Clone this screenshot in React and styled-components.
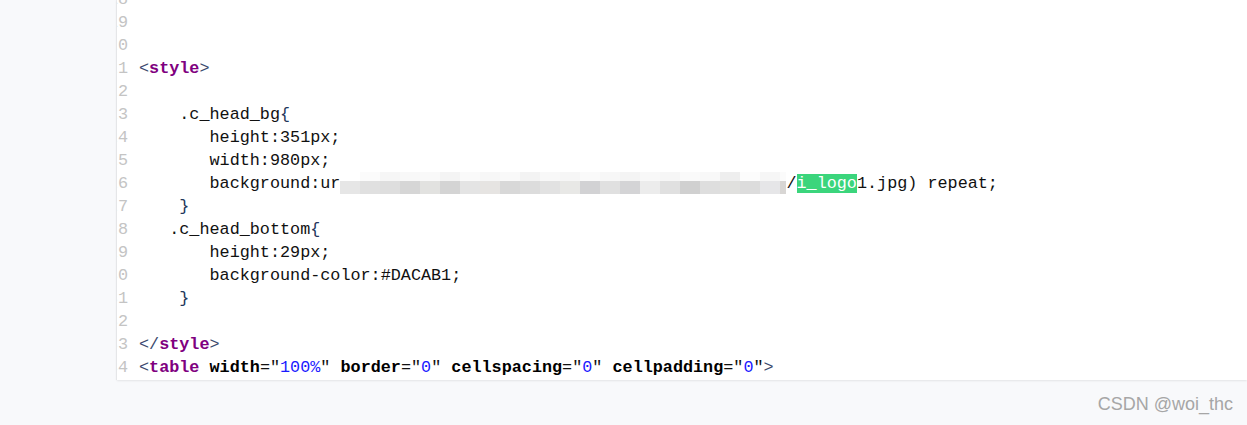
import React from 'react';
import styled, { createGlobalStyle } from 'styled-components';

const GlobalStyle = createGlobalStyle`
  html, body {
    margin: 0;
    padding: 0;
    background: #f8f9fb;
  }
`;

const Page = styled.div`
  width: 1247px;
  height: 425px;
  overflow: hidden;
  background: #f8f9fb;
  display: flex;
  flex-direction: column;
`;

const Editor = styled.div`
  margin-left: 117px;
  width: 1130px;
  height: 380px;
  flex: none;
  overflow: hidden;
  background: #ffffff;
  box-shadow: 0 1px 2px rgba(0, 0, 0, 0.08), -1px 0 1px rgba(0, 0, 0, 0.05);
`;

const Lines = styled.div`
  margin-top: -12px;
  font-family: 'Liberation Mono', 'Courier New', monospace;
  font-size: 16.8px;
  line-height: 23px;
`;

const Line = styled.div`
  display: flex;
  height: 23px;
`;

const Gutter = styled.div`
  width: 11px;
  flex: none;
  overflow: hidden;
  display: flex;
  justify-content: flex-end;
  color: #c4c4c4;
  white-space: pre;
`;

const Code = styled.div`
  padding-left: 11px;
  white-space: pre;
  color: #111;
`;

const Tok = styled.span`
  ${({ $k }) => {
    switch ($k) {
      case 'br':
        return 'color: #3c4a6e;';
      case 'tag':
        return 'color: #800080; font-weight: bold;';
      case 'attr':
        return 'color: #000; font-weight: bold;';
      case 'val':
        return 'color: #1a1aff;';
      case 'brace':
        return 'color: #23355a;';
      case 'hl':
        return 'color: #ffffff; background: #3bd57c;';
      default:
        return 'color: #111;';
    }
  }}
`;

const Mosaic = styled.span`
  display: inline-flex;
  flex-direction: column;
  vertical-align: top;
  width: 446px;
  height: 23px;
  overflow: hidden;
`;

const MosaicRow = styled.span`
  display: flex;
  height: ${({ $h }) => $h}px;
`;

const Cell = styled.span`
  width: 20px;
  flex: none;
  background: ${({ $c }) => $c};
`;

const Footer = styled.div`
  flex: 1;
  display: flex;
  align-items: center;
  justify-content: flex-end;
  padding: 4px 14px 0 0;
  font-family: 'Liberation Sans', Arial, sans-serif;
  font-size: 18px;
  color: #a6a6a6;
`;

const topShades = [
  '#ffffff', '#fbfbfb', '#f6f6f6', '#f8f8f8', '#f9f9f9', '#f4f4f4', '#fafafa', '#f7f7f7',
  '#f9f9f9', '#f3f3f3', '#f8f8f8', '#f6f6f6', '#fafafa', '#f7f7f7', '#f4f4f4', '#f8f8f8',
  '#f6f6f6', '#fafafa', '#f8f8f8', '#eeeeee', '#fcfcfc', '#f6f6f6', '#fbfbfb',
];

const bottomShades = [
  '#e6e6e6', '#e0e0e0', '#dedede', '#d6d6d6', '#e2e2e0', '#d4d4d4', '#e4e4e4', '#e6e4e2',
  '#d8d8d8', '#dcdcdc', '#e2e2e2', '#e8e8e6', '#d2d2d4', '#e0e0e0', '#d4d4d6', '#ececec',
  '#e0e0e0', '#d0d0d0', '#dedede', '#e0e0de', '#dcdcdc', '#e6e6e8', '#d8d6d4',
];

const Blur = () => (
  <Mosaic>
    <MosaicRow $h={9}>
      {topShades.map((c, i) => <Cell key={i} $c={c} />)}
    </MosaicRow>
    <MosaicRow $h={13}>
      {bottomShades.map((c, i) => <Cell key={i} $c={c} />)}
    </MosaicRow>
  </Mosaic>
);

const t = (k, s) => ({ k, s });

const lines = [
  { n: 18, parts: [] },
  { n: 19, parts: [] },
  { n: 20, parts: [] },
  { n: 21, parts: [t('br', '<'), t('tag', 'style'), t('br', '>')] },
  { n: 22, parts: [] },
  { n: 23, parts: [t('', '    .c_head_bg'), t('brace', '{')] },
  { n: 24, parts: [t('', '       height:351px;')] },
  { n: 25, parts: [t('', '       width:980px;')] },
  {
    n: 26,
    parts: [
      t('', '       background:ur'),
      t('blur'),
      t('', '/'),
      t('hl', 'i_logo'),
      t('', '1.jpg) repeat;'),
    ],
  },
  { n: 27, parts: [t('brace', '    }')] },
  { n: 28, parts: [t('', '   .c_head_bottom'), t('brace', '{')] },
  { n: 29, parts: [t('', '       height:29px;')] },
  { n: 30, parts: [t('', '       background-color:#DACAB1;')] },
  { n: 31, parts: [t('brace', '    }')] },
  { n: 32, parts: [] },
  { n: 33, parts: [t('br', '</'), t('tag', 'style'), t('br', '>')] },
  {
    n: 34,
    parts: [
      t('br', '<'),
      t('tag', 'table'),
      t('', ' '),
      t('attr', 'width'),
      t('', '="'),
      t('val', '100%'),
      t('', '" '),
      t('attr', 'border'),
      t('', '="'),
      t('val', '0'),
      t('', '" '),
      t('attr', 'cellspacing'),
      t('', '="'),
      t('val', '0'),
      t('', '" '),
      t('attr', 'cellpadding'),
      t('', '="'),
      t('val', '0'),
      t('', '"'),
      t('br', '>'),
    ],
  },
];

const App = () => {
  return (
    <Page>
      <GlobalStyle />
      <Editor>
        <Lines>
          {lines.map((line) => (
            <Line key={line.n}>
              <Gutter>{String(line.n)}</Gutter>
              <Code>
                {line.parts.map((p, i) =>
                  p.k === 'blur' ? (
                    <Blur key={i} />
                  ) : (
                    <Tok key={i} $k={p.k}>
                      {p.s}
                    </Tok>
                  )
                )}
              </Code>
            </Line>
          ))}
        </Lines>
      </Editor>
      <Footer>CSDN @woi_thc</Footer>
    </Page>
  );
};

export default App;
